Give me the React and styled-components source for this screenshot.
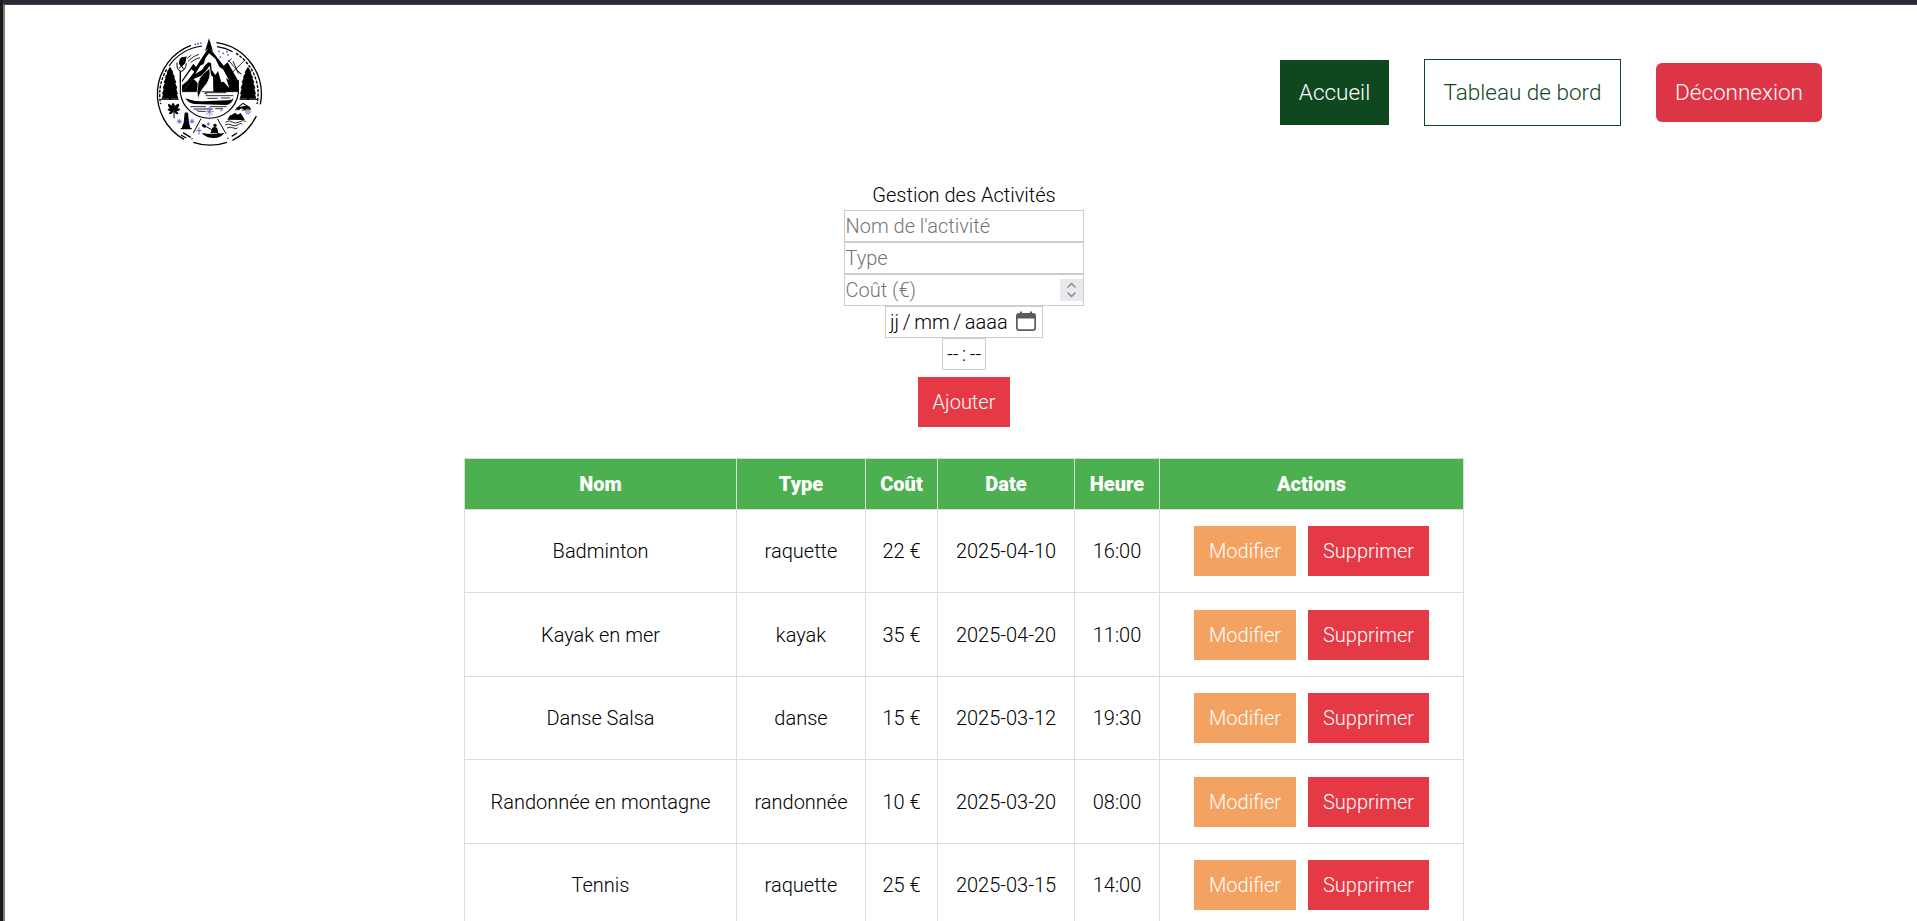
import React from "react";
import styled, { createGlobalStyle } from "styled-components";

const GlobalStyle = createGlobalStyle`
  *, *::before, *::after { box-sizing: border-box; }
  html, body { margin: 0; padding: 0; }
  body {
    height: 921px;
    overflow: hidden;
    background: #fff;
    color: #000;
    font-family: Roboto, "Liberation Sans", sans-serif;
    font-size: 20px;
    font-weight: 300;
  }
`;

const Frame = styled.div`
  height: 921px;
  padding: 4px 0 0 3px;
  background: linear-gradient(#2b2a33, #2b2a33) 3px 0 / 100% 4px no-repeat, #1b1b1b;
`;

const Page = styled.div`
  height: 917px;
  overflow: hidden;
  border-left: 2px solid #7b7b7b;
  border-top: 1px solid #42414d;
  background: #fff;
`;

const Header = styled.header`
  display: flex;
  align-items: center;
  justify-content: space-between;
  height: 175px;
  padding: 0 95px 0 140px;
  margin-bottom: -2px;
`;

const Logo = styled.svg`
  display: block;
  width: 130px;
  height: 125px;
`;

const Nav = styled.nav`
  display: flex;
  align-items: center;
  gap: 35px;
`;

const NavLink = styled.a`
  display: flex;
  align-items: center;
  justify-content: center;
  width: ${(p) => p.$width}px;
  height: ${(p) => p.$height}px;
  padding-bottom: 2px;
  font-size: 22.5px;
  white-space: nowrap;
  color: ${(p) => p.$color || "#fff"};
  background: ${(p) => p.$bg || "transparent"};
  border: ${(p) => (p.$outlined ? "1px solid #0f481f" : "0")};
  border-radius: ${(p) => p.$radius || 0}px;
`;

const Main = styled.main`
  display: flex;
  flex-direction: column;
  align-items: center;
  padding-left: 6px;
`;

const Form = styled.form`
  display: flex;
  flex-direction: column;
  align-items: center;
  width: 240px;
  margin-bottom: 31px;
`;

const Title = styled.div`
  height: 32px;
  line-height: 34px;
`;

const Field = styled.div`
  display: flex;
  align-items: center;
  justify-content: space-between;
  width: ${(p) => p.$width}px;
  height: 32px;
  padding: 0 0 0 ${(p) => p.$inset || 0.5}px;
  border: 1px solid #ccc;
  color: ${(p) => (p.$filled ? "#000" : "#757575")};
  word-spacing: ${(p) => (p.$filled ? "-1.3px" : "normal")};
  white-space: pre;
`;

const Spinner = styled.svg`
  width: 23px;
  height: 22px;
  background: #e9e9ed;
`;

const Calendar = styled.svg`
  width: 20px;
  height: 20px;
  margin: 0 6px 3px 0;
`;

const Button = styled.button`
  width: ${(p) => p.$width}px;
  height: 50px;
  padding: 0;
  border: 0;
  color: #fff;
  background: ${(p) => p.$bg};
  font: inherit;
`;

const AddButton = styled(Button)`
  margin-top: 7px;
`;

const Table = styled.table`
  width: 1000px;
  table-layout: fixed;
  border-collapse: collapse;
  text-align: center;
`;

const Col = styled.col`
  width: ${(p) => p.$width}px;
`;

const HeadCell = styled.th`
  height: 51px;
  padding: 0;
  border: 1px solid #ddd;
  background: #4caf50;
  color: #fff;
  font-weight: 900;
`;

const Row = styled.tr`
  height: ${(p) => p.$height}px;
`;

const Cell = styled.td`
  padding: 0;
  border: 1px solid #ddd;
`;

const Actions = styled.div`
  display: flex;
  justify-content: center;
  gap: 12px;
`;

const columns = [
  ["Nom", 272], ["Type", 129], ["Coût", 72], ["Date", 137], ["Heure", 85], ["Actions", 304],
];

const activities = [
  ["Badminton", "raquette", "22 €", "2025-04-10", "16:00"],
  ["Kayak en mer", "kayak", "35 €", "2025-04-20", "11:00"],
  ["Danse Salsa", "danse", "15 €", "2025-03-12", "19:30"],
  ["Randonnée en montagne", "randonnée", "10 €", "2025-03-20", "08:00"],
  ["Tennis", "raquette", "25 €", "2025-03-15", "14:00"],
];

function Tree({ x }) {
  return (
    <path
      transform={`translate(${x} 110)`}
      d="M0 0L10 17L8 19L15 31L13 34L19 47L16 50L22 64L19 67L24 81L21 83L25 96H3V100H-3V96H-25L-21 83L-24 81L-19 67L-22 64L-16 50L-19 47L-13 34L-15 31L-8 19L-10 17Z"
    />
  );
}

function Star({ x, y, r }) {
  const k = r * 0.7;
  return (
    <path
      d={`M${x - r} ${y}h${2 * r}M${x} ${y - r}v${2 * r}M${x - k} ${y - k}l${2 * k} ${2 * k}M${x + k} ${y - k}l${-2 * k} ${2 * k}`}
      stroke="#4350c8"
      strokeWidth="2"
    />
  );
}

function Emblem() {
  return (
    <Logo viewBox="0 0 390 375" fill="#000">
      <g fill="none" stroke="#000" strokeWidth="4">
        <path d="M138 46A156 156 0 0 0 117 328" />
        <path d="M214 38A156 156 0 0 1 346 223" />
        <path d="M334 258A157 157 0 0 1 262 331" />
        <path d="M123 324L108 315M137 322L114 308M260 319L276 309" />
        <path d="M145 337A157 157 0 0 0 246 337" />
        <path d="M171 48A146 146 0 0 0 72 108M216 50A144 144 0 0 1 263 65" strokeWidth="3.5" />
        <path d="M65 118A147 147 0 0 0 47 222M273 70A144 144 0 0 1 336 222" strokeDasharray="9 4" />
        <path d="M106 125V190A88 88 0 0 0 280 190V151" strokeWidth="3.5" />
        <path d="M111 185H279" strokeWidth="2" />
        <path d="M168 266L145 309M217 266L243 311" strokeWidth="3" />
        <path d="M106 122V158M96 98Q94 120 107 124Q122 123 124 100M103 98L117 119M119 99L101 116" strokeWidth="3" />
        <path d="M130 93Q146 77 162 73M137 98Q149 86 165 83M127 85L139 75" strokeWidth="2.5" />
        <path d="M250 91L287 132M264 93L280 131M299 91L261 128M248 96L260 86M280 124L290 133" strokeWidth="2.5" />
      </g>
      <path d="M192 25L204 64L192 53L180 64Z" />
      <path
        fillRule="evenodd"
        d="M192 51L236 107L248 97L280 153V185H208L219 174L209 145L198 136L194 107L174 135L145 147L111 185V151L145 101L153 111ZM192 70L181 85L176 102L166 107L151 132L171 119L181 105L190 97L198 99L200 120L211 135L219 123L229 157L253 174L243 144L252 151L235 119L223 110L211 86Z"
      />
      <path d="M111 157L139 118L148 125L127 153L111 166Z" fill="#fff" />
      <path d="M111 185L145 146L158 159L163 185ZM204 139L223 158L236 155L252 174L259 185H205Z" />
      <path d="M194 115Q155 142 158 173Q154 189 160 206Q164 183 185 161Q198 143 194 115Z" stroke="#fff" strokeWidth="2" />
      <path d="M121 205Q147 215 174 214L248 211Q260 211 266 204Q260 224 242 225L148 222Q129 219 121 205Z" />
      <path
        d="M180 188H244M182 197H265M187 205H218M228 204H255M178 190L187 192M136 230H183M194 230H245M145 237H203M211 236H234M159 244H181"
        fill="none"
        stroke="#000"
        strokeWidth="2.5"
      />
      <path d="M103 90Q108 79 116 82L125 79L121 99L109 110L102 102Z" />
      <Tree x={75} />
      <Tree x={309} />
      <path d="M48 208H101M284 208H336" stroke="#000" strokeWidth="3" />
      <g>
        {[[-82, 0.82], [-42, 1.1], [-5, 1], [40, 1.1], [82, 0.9], [-128, 0.8], [128, 0.8]].map(([angle, size]) => (
          <path
            key={angle}
            transform={`translate(86 241) rotate(${angle}) scale(${size})`}
            d="M0 1C-7 -8 -6 -17 0 -23C6 -17 7 -8 0 1Z"
          />
        ))}
        <path d="M85 240H88L89 265H86Z" />
      </g>
      <path d="M119 248H129L132 278L137 297H109L116 278ZM107 294H140V298H107Z" />
      <path d="M272 235Q281 231 285 225L294 218L314 230L319 240L308 236L299 240L289 235L281 241Z" />
      <path d="M283 230L294 222L306 229L298 227L289 230Z" fill="#fff" />
      <path d="M247 269L254 257L263 253L270 248L278 254L287 249L295 262L299 270Z" />
      <path
        d="M242 276Q252 269 262 276T282 276T302 274M240 285Q250 279 260 285T280 284T291 283M246 294Q257 289 266 294T278 293M270 239H282M290 240H315"
        fill="none"
        stroke="#000"
        strokeWidth="2.5"
      />
      <path d="M174 282L184 290L203 301M215 307L225 313" fill="none" stroke="#000" strokeWidth="3" />
      <ellipse cx="177" cy="288" rx="7" ry="4" transform="rotate(25 177 288)" />
      <circle cx="210" cy="286" r="5" />
      <path d="M202 293Q211 288 217 295L220 310H196ZM170 309Q203 315 238 309Q228 324 206 324Q183 324 170 309Z" />
      <g fill="none">
        <Star x={193} y={245} r={14} />
        <Star x={103} y={274} r={8} />
        <Star x={141} y={274} r={8} />
        <Star x={190} y={282} r={5} />
        <path d="M154 302H170M162 292V314M300 246H319M304 251H314" stroke="#4350c8" strokeWidth="2.5" />
      </g>
      <g fill="#4350c8">
        {[[151, 43], [159, 41], [168, 39], [222, 64], [235, 70], [249, 75], [226, 81], [246, 65], [157, 241], [229, 241], [123, 248], [141, 326], [249, 325]].map(([x, y]) => (
          <circle key={`${x}-${y}`} cx={x} cy={y} r="2.6" />
        ))}
      </g>
    </Logo>
  );
}

export default function App() {
  return (
    <>
      <GlobalStyle />
      <Frame>
        <Page>
          <Header>
            <Emblem />
            <Nav>
              <NavLink $width={109} $height={65} $bg="#0f481f">Accueil</NavLink>
              <NavLink $width={197} $height={67} $color="#0f481f" $outlined>Tableau de bord</NavLink>
              <NavLink $width={166} $height={59} $bg="#dc3545" $radius={6}>Déconnexion</NavLink>
            </Nav>
          </Header>
          <Main>
            <Form>
              <Title>Gestion des Activités</Title>
              <Field $width={240}>Nom de l'activité</Field>
              <Field $width={240}>Type</Field>
              <Field $width={240}>
                Coût (€)
                <Spinner viewBox="0 0 23 22" fill="none" stroke="#8f8f9d" strokeWidth="1.7" strokeLinecap="round" strokeLinejoin="round">
                  <path d="M8 8L11.5 4.5L15 8M8 14L11.5 17.5L15 14" />
                </Spinner>
              </Field>
              <Field $width={158} $inset={4} $filled>
                jj / mm / aaaa
                <Calendar viewBox="0 0 20 20">
                  <path
                    fill="#5b5b5b"
                    fillRule="evenodd"
                    d="M4 0.5H6V2H14V0.5H16V2H17Q20 2 20 5V17Q20 20 17 20H3Q0 20 0 17V5Q0 2 3 2H4ZM1.7 7.5V17Q1.7 18.3 3 18.3H17Q18.3 18.3 18.3 17V7.5Z"
                  />
                </Calendar>
              </Field>
              <Field $width={44} $inset={4} $filled>-- : --</Field>
              <AddButton type="button" $width={92} $bg="#e63946">Ajouter</AddButton>
            </Form>
            <Table>
              <colgroup>
                {columns.map(([name, width]) => <Col key={name} $width={width} />)}
              </colgroup>
              <thead>
                <tr>{columns.map(([name]) => <HeadCell key={name}>{name}</HeadCell>)}</tr>
              </thead>
              <tbody>
                {activities.map((cells, i) => (
                  <Row key={cells[0]} $height={i % 2 ? 84 : 83}>
                    {cells.map((text, j) => <Cell key={j}>{text}</Cell>)}
                    <Cell>
                      <Actions>
                        <Button type="button" $width={102} $bg="#f4a261">Modifier</Button>
                        <Button type="button" $width={121} $bg="#e63946">Supprimer</Button>
                      </Actions>
                    </Cell>
                  </Row>
                ))}
              </tbody>
            </Table>
          </Main>
        </Page>
      </Frame>
    </>
  );
}
